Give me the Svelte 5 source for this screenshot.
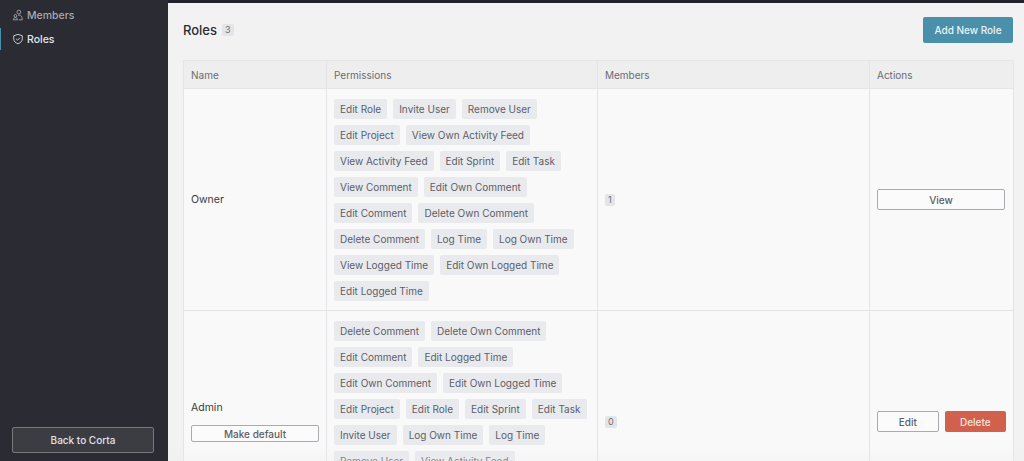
<script lang="ts">
	const ownerPerms = [
		'Edit Role', 'Invite User', 'Remove User', 'Edit Project', 'View Own Activity Feed',
		'View Activity Feed', 'Edit Sprint', 'Edit Task', 'View Comment', 'Edit Own Comment',
		'Edit Comment', 'Delete Own Comment', 'Delete Comment', 'Log Time', 'Log Own Time',
		'View Logged Time', 'Edit Own Logged Time', 'Edit Logged Time'
	];
	const adminPerms = [
		'Delete Comment', 'Delete Own Comment', 'Edit Comment', 'Edit Logged Time',
		'Edit Own Comment', 'Edit Own Logged Time', 'Edit Project', 'Edit Role', 'Edit Sprint',
		'Edit Task', 'Invite User', 'Log Own Time', 'Log Time', 'Remove User', 'View Activity Feed'
	];
</script>

<div class="shell">
	<aside class="sidebar">
		<nav class="side-nav">
			<a href="#members" class="side-link">
				<svg width="12" height="12" viewBox="0 0 14 14" fill="none" stroke="currentColor" stroke-width="1">
					<circle cx="8" cy="3.6" r="2.2" />
					<circle cx="4" cy="8" r="1.6" />
					<path d="M1.6 12.6c0-1.7 1-2.7 2.4-2.7s2.4 1 2.4 2.7z" />
					<path d="M7 7.4c.4-.2.8-.3 1.3-.3 2 0 3.7 1.4 3.7 5.5H8" />
				</svg>
				Members
			</a>
			<a href="#roles" class="side-link active">
				<svg width="12" height="12" viewBox="0 0 14 14" fill="none" stroke="currentColor" stroke-width="1">
					<path d="M7 1.6l5 1.6v3.6c0 2.8-2 4.7-5 5.8-3-1.1-5-3-5-5.8V3.2z" stroke-linejoin="round" />
					<path d="M4.9 6.9l1.5 1.5 2.8-2.8" />
				</svg>
				Roles
			</a>
		</nav>
		<button type="button" class="back-btn">Back to Corta</button>
	</aside>

	<main class="content">
		<div class="page-head">
			<h1>Roles <span class="count">3</span></h1>
			<button type="button" class="add-btn">Add New Role</button>
		</div>

		<table class="roles">
			<colgroup>
				<col class="col-name" />
				<col class="col-perms" />
				<col class="col-members" />
				<col class="col-actions" />
			</colgroup>
			<thead>
				<tr>
					<th>Name</th>
					<th>Permissions</th>
					<th>Members</th>
					<th>Actions</th>
				</tr>
			</thead>
			<tbody>
				<tr>
					<td>Owner</td>
					<td class="perms">
						<div class="tags">
							{#each ownerPerms as perm}
								<span class="tag">{perm}</span>
							{/each}
						</div>
					</td>
					<td><span class="count small">1</span></td>
					<td><button type="button" class="btn outline wide">View</button></td>
				</tr>
				<tr class="admin">
					<td>
						<div class="role-name">Admin</div>
						<button type="button" class="btn outline default-btn">Make default</button>
					</td>
					<td class="perms">
						<div class="tags">
							{#each adminPerms as perm}
								<span class="tag">{perm}</span>
							{/each}
						</div>
					</td>
					<td><span class="count small">0</span></td>
					<td>
						<div class="row-actions">
							<button type="button" class="btn outline">Edit</button>
							<button type="button" class="btn danger">Delete</button>
						</div>
					</td>
				</tr>
			</tbody>
		</table>
		<div class="fade"></div>
	</main>
</div>

<style>
	:global(body) {
		margin: 0;
		background: #22232a;
		font-family: Inter, 'Noto Sans', sans-serif;
	}

	.shell {
		display: flex;
		height: 100vh;
		overflow: hidden;
		box-sizing: border-box;
		padding-top: 3px;
	}

	.sidebar {
		width: 168px;
		flex-shrink: 0;
		background: #2a2b33;
		display: flex;
		flex-direction: column;
		justify-content: space-between;
		margin-top: -3px;
		padding-bottom: 8px;
		box-sizing: border-box;
	}

	.side-nav {
		display: flex;
		flex-direction: column;
		gap: 3px;
		padding-top: 5px;
	}

	.side-link {
		display: flex;
		align-items: center;
		gap: 3px;
		height: 20px;
		padding-left: 11px;
		font-size: 10.5px;
		font-weight: 500;
		color: #a9aab0;
		text-decoration: none;
		border-left: 1px solid transparent;
	}

	.side-link.active {
		color: #e4e4e8;
		border-left-color: #4b90aa;
		height: 22px;
	}

	.back-btn {
		font: inherit;
		font-size: 10px;
		font-weight: 500;
		margin: 0 14px 0 12px;
		height: 26px;
		background: #3c3d43;
		color: #e2e2e4;
		border: 1px solid #77787d;
		border-radius: 2px;
	}

	.content {
		position: relative;
		flex: 1;
		min-width: 0;
		background: #f2f2f2;
		padding: 14px 11px 0 15px;
		box-sizing: border-box;
		overflow: hidden;
	}

	.page-head {
		display: flex;
		align-items: center;
		justify-content: space-between;
		height: 26px;
		margin-bottom: 17px;
	}

	h1 {
		margin: 0;
		font-size: 13px;
		font-weight: 500;
		color: #2b2c33;
		display: flex;
		align-items: center;
		gap: 5px;
	}

	.count {
		display: inline-block;
		background: #e4e5e8;
		color: #6b6d76;
		font-size: 9px;
		font-weight: 400;
		line-height: 12px;
		padding: 0 3px;
		border-radius: 2px;
	}

	.add-btn {
		font: inherit;
		font-size: 10px;
		font-weight: 500;
		height: 26px;
		width: 90px;
		padding: 0;
		background: #4a90aa;
		color: #eaf3f6;
		border: none;
		border-radius: 2px;
	}

	.roles {
		width: 830px;
		table-layout: fixed;
		border-collapse: collapse;
		font-size: 10.5px;
		color: #3a3b43;
	}

	.col-name { width: 143px; }
	.col-perms { width: 271px; }
	.col-members { width: 272px; }
	.col-actions { width: 144px; }

	.roles th {
		height: 28px;
		padding: 0 7px;
		box-sizing: border-box;
		background: #eeeeef;
		border: 1px solid #e5e5e7;
		text-align: left;
		font-size: 10px;
		font-weight: 400;
		color: #6a6b74;
	}

	.roles td {
		padding: 7px;
		background: #f9f9f9;
		border: 1px solid #e4e4e6;
		vertical-align: middle;
	}

	.roles td.perms {
		padding-top: 10px;
		padding-bottom: 9px;
		vertical-align: top;
	}

	.admin {
		height: 222px;
	}

	.tags {
		display: flex;
		flex-wrap: wrap;
		gap: 6px;
	}

	.tag {
		height: 20px;
		line-height: 20px;
		padding: 0 6px;
		background: #e9eaed;
		color: #5c5e68;
		font-size: 10px;
		border-radius: 2px;
		white-space: nowrap;
	}

	.role-name {
		margin-bottom: 11px;
	}

	.btn {
		font: inherit;
		font-size: 10px;
		font-weight: 500;
		height: 21px;
		padding: 0;
		border-radius: 2px;
	}

	.outline {
		background: #fbfbfb;
		color: #5c5e68;
		border: 1px solid #a9abb3;
	}

	.wide {
		width: 128px;
	}

	.default-btn {
		display: block;
		width: 128px;
		height: 17px;
		line-height: 14px;
	}

	.row-actions {
		display: flex;
		gap: 6px;
	}

	.row-actions .btn {
		width: 62px;
	}

	.danger {
		background: #d1604c;
		color: #f6e3df;
		border: none;
	}

	.fade {
		position: absolute;
		left: 0;
		right: 0;
		bottom: 0;
		height: 16px;
		background: linear-gradient(to bottom, rgba(235, 236, 238, 0), rgba(235, 236, 238, 0.3));
	}
</style>
